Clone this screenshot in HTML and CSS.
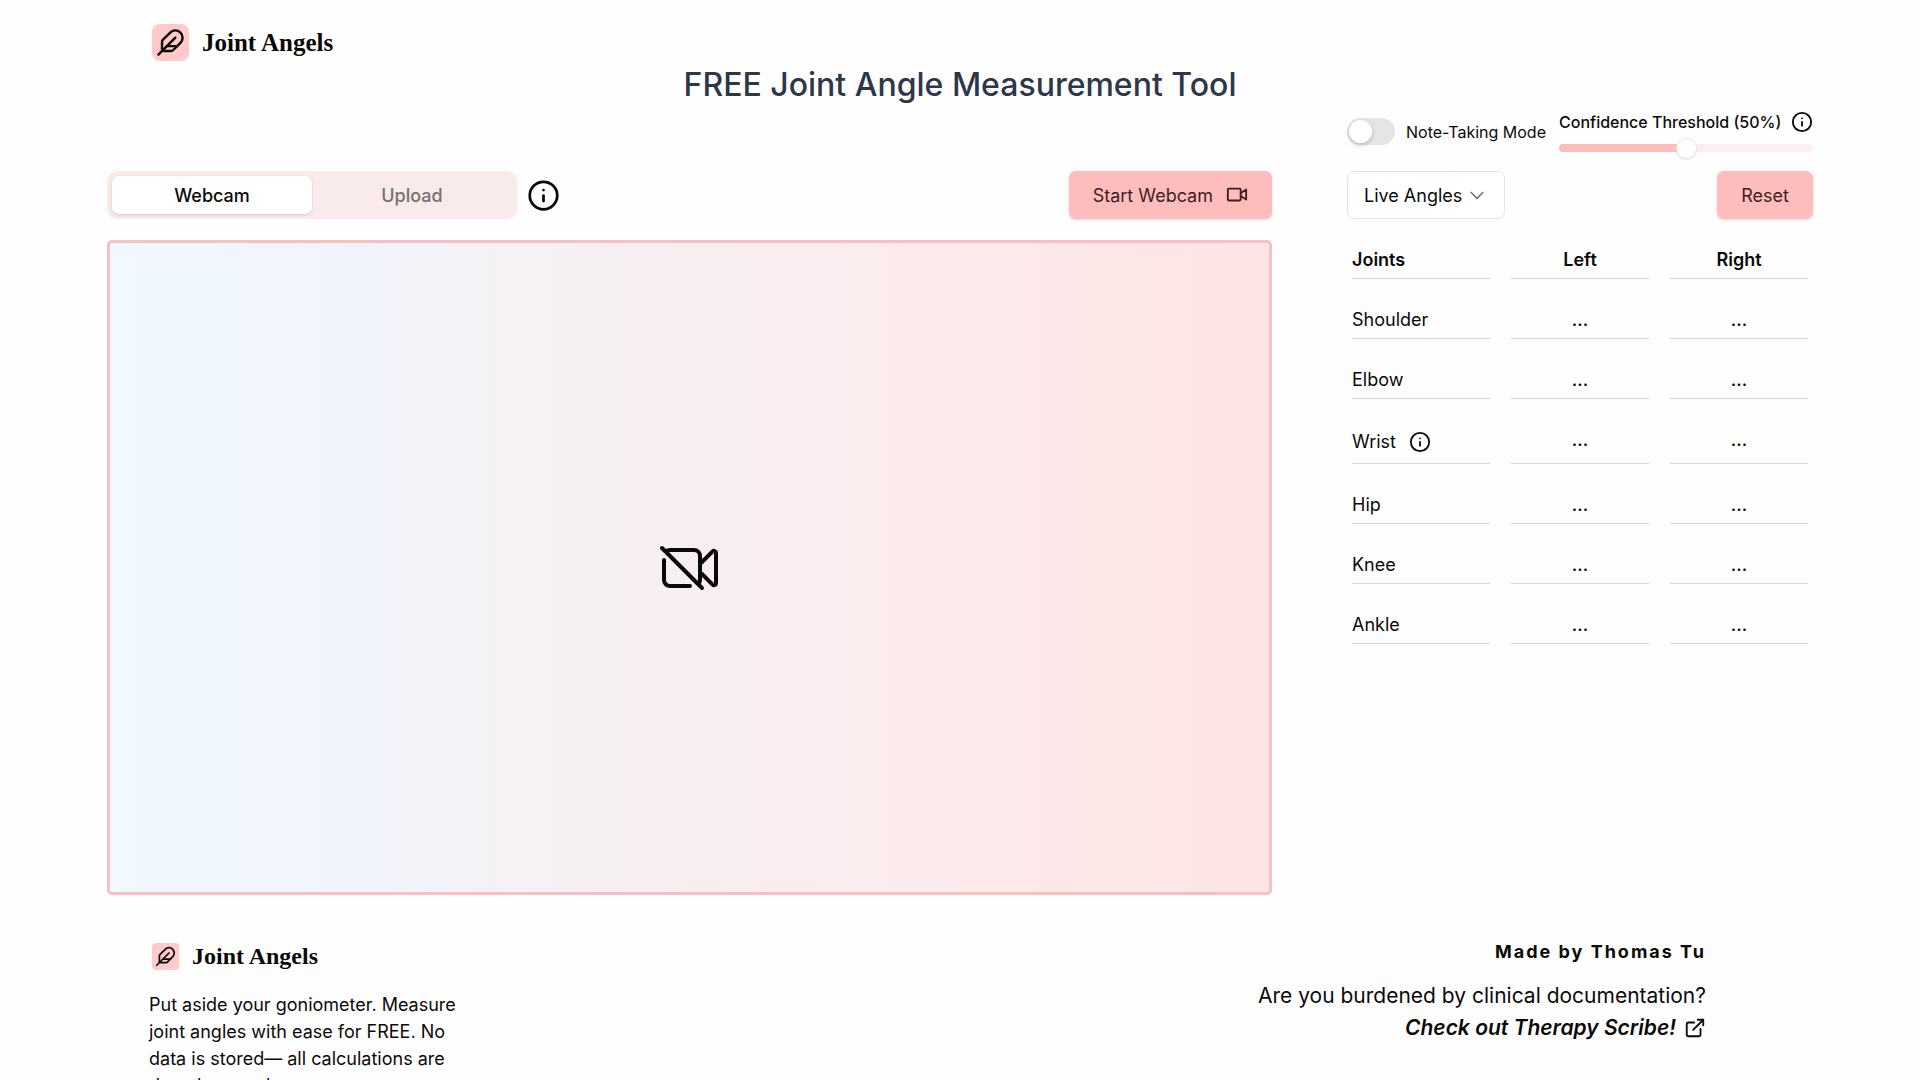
FILE: index.html
```html
<!DOCTYPE html>
<html lang="en">
<head>
    <meta charset="UTF-8">
    <meta name="viewport" content="width=device-width, initial-scale=1.0">
    <title>Joint Angels</title>
    <link rel="stylesheet" href="styles.css">
</head>
<body>

    <!-- Shared icons -->
    <svg class="sprite" aria-hidden="true">
        <symbol id="feather" viewBox="0 0 24 24">
            <path d="M12.67 19a2 2 0 0 0 1.416-.588l6.154-6.172a6 6 0 0 0-8.49-8.49L5.586 9.914A2 2 0 0 0 5 11.328V18a1 1 0 0 0 1 1z"/>
            <path d="M16 8 2 22"/>
            <path d="M17.5 15H9"/>
        </symbol>
        <symbol id="info" viewBox="0 0 24 24">
            <circle cx="12" cy="12" r="10"/>
            <path d="M12 16v-4"/>
            <path d="M12 8h.01"/>
        </symbol>
    </svg>

    <header class="header">
        <a href="#" class="logo">
            <svg class="logo-icon"><use href="#feather"/></svg>
            Joint Angels
        </a>
        <h1>FREE Joint Angle Measurement Tool</h1>
    </header>

    <main class="main">
        <section class="camera">
            <div class="toolbar">
                <div class="tabs" role="tablist">
                    <button class="tab active" role="tab" aria-selected="true">Webcam</button>
                    <button class="tab" role="tab" aria-selected="false">Upload</button>
                </div>
                <button class="info-btn" aria-label="Webcam info">
                    <svg class="icon icon-lg"><use href="#info"/></svg>
                </button>
                <button class="btn start-btn">
                    Start Webcam
                    <svg class="icon icon-video" viewBox="0 0 24 24">
                        <rect x="2" y="5" width="14" height="13" rx="1"/>
                        <path d="m16 10 6-4v11l-6-4"/>
                    </svg>
                </button>
            </div>
            <div class="video-box">
                <svg class="icon icon-off" viewBox="0 0 24 24">
                    <path d="m15.75 10.5 4.72-4.72a.75.75 0 0 1 1.28.53v11.38a.75.75 0 0 1-1.28.53l-4.72-4.72M12 18.75H4.5a2.25 2.25 0 0 1-2.25-2.25V9m12.841 9.091L16.5 19.5m-1.409-1.409c.407-.407.659-.97.659-1.591v-9a2.25 2.25 0 0 0-2.25-2.25h-9c-.621 0-1.184.252-1.591.659m12.182 12.182L2.909 5.909M1.5 4.5l1.409 1.409"/>
                </svg>
            </div>
        </section>

        <section class="angles">
            <div class="settings">
                <label class="note-mode">
                    <input type="checkbox" class="switch" role="switch">
                    Note-Taking Mode
                </label>
                <div class="confidence">
                    <div class="confidence-label">
                        <label for="threshold">Confidence Threshold (50%)</label>
                        <button class="info-btn" aria-label="Confidence info">
                            <svg class="icon"><use href="#info"/></svg>
                        </button>
                    </div>
                    <input type="range" id="threshold" class="slider" min="0" max="100" value="50">
                </div>
            </div>
            <div class="toolbar">
                <div class="select-wrap">
                    <select class="mode-select" aria-label="Angle mode">
                        <option>Live Angles</option>
                    </select>
                    <svg class="icon chevron" viewBox="0 0 24 24"><path d="m5 9 7 7 7-7"/></svg>
                </div>
                <button class="btn">Reset</button>
            </div>
            <table class="joints">
                <thead>
                    <tr><th>Joints</th><th>Left</th><th>Right</th></tr>
                </thead>
                <tbody>
                    <tr><td>Shoulder</td><td>...</td><td>...</td></tr>
                    <tr><td>Elbow</td><td>...</td><td>...</td></tr>
                    <tr class="wrist">
                        <td>
                            <div class="joint-name">
                                Wrist
                                <button class="info-btn" aria-label="Wrist info">
                                    <svg class="icon"><use href="#info"/></svg>
                                </button>
                            </div>
                        </td>
                        <td>...</td>
                        <td>...</td>
                    </tr>
                    <tr><td>Hip</td><td>...</td><td>...</td></tr>
                    <tr><td>Knee</td><td>...</td><td>...</td></tr>
                    <tr><td>Ankle</td><td>...</td><td>...</td></tr>
                </tbody>
            </table>
        </section>
    </main>

    <footer class="footer">
        <div class="about">
            <a href="#" class="logo logo-small">
                <svg class="logo-icon"><use href="#feather"/></svg>
                Joint Angels
            </a>
            <p>Put aside your goniometer. Measure joint angles with ease for FREE. No data is stored— all calculations are done by your browser.</p>
        </div>
        <div class="credits">
            <p class="author">Made by Thomas Tu</p>
            <p>Are you burdened by clinical documentation?</p>
            <a href="#" class="scribe">
                Check out Therapy Scribe!
                <svg class="icon" viewBox="0 0 24 24">
                    <path d="M15 3h6v6"/>
                    <path d="M10 14 21 3"/>
                    <path d="M18 13v6a2 2 0 0 1-2 2H5a2 2 0 0 1-2-2V8a2 2 0 0 1 2-2h6"/>
                </svg>
            </a>
        </div>
    </footer>

</body>
</html>
```
FILE: styles.css
```css
* {
    box-sizing: border-box;
}

body {
    margin: 0;
    font-family: Inter, "Liberation Sans", sans-serif;
    font-size: 18px;
    line-height: 27px;
    color: #0c0a09;
    background: #fefefe;
}

button, select, input {
    font: inherit;
    color: inherit;
    margin: 0;
}

button {
    cursor: pointer;
}

a {
    color: inherit;
    text-decoration: none;
}

p, h1 {
    margin: 0;
}

.sprite {
    display: none;
}

.icon, .logo-icon {
    width: 22px;
    height: 22px;
    flex: none;
    fill: none;
    stroke: currentColor;
    stroke-width: 2;
    stroke-linecap: round;
    stroke-linejoin: round;
}

/* Header */
.header {
    display: flex;
    flex-direction: column;
    align-items: flex-start;
    gap: 4px;
    padding: 24px 152px 0;
}

.logo {
    display: flex;
    align-items: center;
    gap: 13px;
    font-family: "Liberation Serif", serif;
    font-size: 25px;
    font-weight: bold;
}

.logo-icon {
    width: 37px;
    height: 37px;
    padding: 4px;
    border-radius: 8px;
    background: #fecaca;
}

h1 {
    align-self: center;
    font-size: 32px;
    line-height: 40px;
    font-weight: 500;
    color: #2d3748;
}

/* Main area */
.main {
    display: flex;
    align-items: flex-start;
    gap: 75px;
    padding: 6px 107px 0;
}

.camera {
    flex: 5;
    padding-top: 60px;
}

.angles {
    flex: 2;
}

.toolbar {
    display: flex;
    align-items: center;
    height: 48px;
}

.tabs {
    display: flex;
    width: 410px;
    height: 48px;
    padding: 5px;
    border-radius: 10px;
    background: #f9eaeb;
}

.tab {
    flex: 1;
    border: none;
    border-radius: 7px;
    background: none;
    font-weight: 500;
    color: #78716c;
}

.tab.active {
    background: white;
    color: #0c0a09;
    box-shadow: 0 1px 3px rgba(0, 0, 0, 0.15);
}

.info-btn {
    display: flex;
    padding: 0;
    border: none;
    background: none;
}

.tabs + .info-btn {
    margin-left: 10px;
}

.icon-lg {
    width: 33px;
    height: 33px;
}

.btn {
    display: flex;
    align-items: center;
    height: 48px;
    margin-left: auto;
    padding: 0 24px;
    border: none;
    border-radius: 7px;
    background: #febdbd;
    color: #431d1d;
    box-shadow: 0 1px 3px rgba(0, 0, 0, 0.15);
}

.start-btn {
    gap: 13px;
}

.video-box {
    display: flex;
    align-items: center;
    justify-content: center;
    aspect-ratio: 16 / 9;
    margin-top: 21px;
    border: 3px solid #f8bfc4;
    border-radius: 5px;
    background: linear-gradient(to right, #f0f9ff, #f1f4fd 20%, #f5f1f4 35%, #fbecee 65%, #fee4e2);
}

.icon-off {
    width: 64px;
    height: 64px;
    stroke-width: 1.5;
}

/* Settings */
.settings {
    display: flex;
    align-items: center;
    justify-content: space-between;
    margin-bottom: 19px;
    font-size: 16px;
    line-height: 22px;
}

.note-mode {
    display: flex;
    align-items: center;
    gap: 11px;
}

.switch {
    appearance: none;
    width: 48px;
    height: 27px;
    padding: 2px;
    border-radius: 14px;
    background: #e5e5e5;
}

.switch::before {
    content: "";
    display: block;
    width: 23px;
    height: 23px;
    border-radius: 50%;
    background: white;
    box-shadow: 0 2px 5px rgba(0, 0, 0, 0.2);
}

.confidence {
    width: 254px;
}

.confidence-label {
    display: flex;
    align-items: center;
    justify-content: space-between;
    margin-bottom: 11px;
    font-weight: 500;
}

.slider {
    appearance: none;
    display: block;
    width: 100%;
    height: 8px;
    border-radius: 4px;
    background: linear-gradient(to right, #febdbd 50%, #ffeef0 50%);
}

.slider::-webkit-slider-thumb {
    appearance: none;
    width: 21px;
    height: 21px;
    border: 1px solid #fde0e2;
    border-radius: 50%;
    background: white;
    box-shadow: 0 1px 2px rgba(0, 0, 0, 0.1);
}

.select-wrap {
    position: relative;
}

.mode-select {
    appearance: none;
    width: 158px;
    height: 48px;
    padding: 0 16px;
    border: 1px solid #e7e5e4;
    border-radius: 7px;
    background: white;
}

.chevron {
    position: absolute;
    top: 14px;
    right: 18px;
    width: 20px;
    height: 20px;
    color: #777;
    pointer-events: none;
}

/* Joint table */
.joints {
    width: calc(100% + 32px);
    margin: 0 -16px;
    table-layout: fixed;
    border-spacing: 21px 0;
}

.joints th, .joints td {
    height: 60px;
    padding: 0 0 5px;
    border-bottom: 1px solid #d6d6d6;
    text-align: center;
    vertical-align: bottom;
}

.joints th {
    font-weight: 600;
}

.joints td + td {
    font-weight: 500;
}

.joints th:first-child, .joints td:first-child {
    text-align: left;
}

.joints .wrist td {
    height: 65px;
    padding-bottom: 8px;
}

.joints .wrist td + td {
    padding-bottom: 10px;
}

.joint-name {
    display: flex;
    align-items: center;
    gap: 13px;
}

/* Footer */
.footer {
    display: flex;
    justify-content: space-between;
    padding: 43px 214px 43px 149px;
}

.about {
    width: 325px;
    padding-top: 5px;
}

.logo-small {
    margin-bottom: 21px;
    padding-left: 3px;
    font-size: 24px;
}

.logo-small .logo-icon {
    width: 27px;
    height: 27px;
    padding: 3px;
    border-radius: 4px;
}

.credits {
    display: flex;
    flex-direction: column;
    align-items: flex-end;
    font-size: 21px;
    line-height: 32px;
}

.author {
    margin-bottom: 15px;
    font-size: 18px;
    line-height: 27px;
    font-weight: 700;
    letter-spacing: 2px;
}

.scribe {
    display: flex;
    align-items: center;
    gap: 8px;
    font-weight: 600;
    font-style: italic;
}
```
